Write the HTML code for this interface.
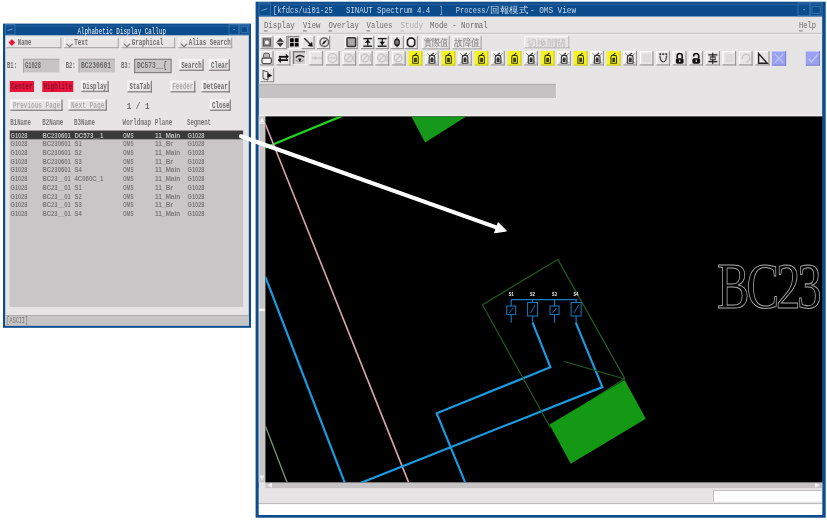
<!DOCTYPE html><html><head><meta charset="utf-8"><style>html,body{margin:0;padding:0;background:#fff;overflow:hidden}svg{display:block;filter:blur(0.35px)}</style></head><body>
<svg width="827" height="520" viewBox="0 0 827 520">
<rect x="0" y="0" width="827" height="520" fill="#ffffff"/>
<rect x="3" y="23.6" width="248" height="304.2" fill="#0b4c8c"/>
<rect x="5.2" y="35.3" width="243.6" height="290.3" fill="#e6e4e4"/>
<rect x="5" y="25.6" width="244" height="0.9" fill="#2d65a0"/>
<rect x="5.5" y="24.5" width="9.5" height="10" fill="none" stroke="#3d78b4" stroke-width="0.8"/>
<line x1="7.5" y1="30.5" x2="12.5" y2="29.0" stroke="#7aa6d2" stroke-width="0.9"/>
<rect x="229" y="24.5" width="10" height="10" fill="none" stroke="#3d78b4" stroke-width="0.8"/>
<rect x="239" y="24.5" width="10" height="10" fill="none" stroke="#3d78b4" stroke-width="0.8"/>
<rect x="233.5" y="29" width="1" height="1" fill="#9bbbe0"/>
<rect x="241" y="26.5" width="6.5" height="6" fill="none" stroke="#3d78b4" stroke-width="0.8"/>
<text x="77.4" y="33.6" font-size="8.296" fill="#f0f4fa" font-family="Liberation Mono" textLength="88.6" lengthAdjust="spacingAndGlyphs">Alphabetic Display Callup</text>
<rect x="6.3" y="37.7" width="55.1" height="10.5" fill="#e6e4e4"/>
<rect x="6.3" y="37.7" width="55.1" height="1.0" fill="#f4f4f4"/>
<rect x="6.3" y="37.7" width="1.0" height="10.5" fill="#f4f4f4"/>
<rect x="6.3" y="47.2" width="55.1" height="1.0" fill="#a4a2a2"/>
<rect x="60.4" y="37.7" width="1.0" height="10.5" fill="#a4a2a2"/>
<polygon points="8.599999999999998,42.6 11.899999999999999,39.300000000000004 15.2,42.6 11.899999999999999,45.9" fill="#e8143c"/>
<text x="17.8" y="45.2" font-size="8.54" fill="#707070" font-family="Liberation Mono" textLength="13.5" lengthAdjust="spacingAndGlyphs" font-weight="bold">Name</text>
<rect x="64" y="37.7" width="54.7" height="10.5" fill="#e6e4e4"/>
<rect x="64" y="37.7" width="54.7" height="1.0" fill="#f4f4f4"/>
<rect x="64" y="37.7" width="1.0" height="10.5" fill="#f4f4f4"/>
<rect x="64" y="47.2" width="54.7" height="1.0" fill="#a4a2a2"/>
<rect x="117.7" y="37.7" width="1.0" height="10.5" fill="#a4a2a2"/>
<polyline points="66.3,43.6 69.6,46.6 72.89999999999999,43.6" fill="none" stroke="#7a7878" stroke-width="1.25"/>
<polyline points="66.3,43.6 69.6,40.300000000000004 72.89999999999999,43.6" fill="none" stroke="#fafafa" stroke-width="0.9"/>
<text x="74.3" y="45.2" font-size="8.54" fill="#707070" font-family="Liberation Mono" textLength="14.0" lengthAdjust="spacingAndGlyphs" font-weight="bold">Text</text>
<rect x="121.4" y="37.7" width="53.79999999999998" height="10.5" fill="#e6e4e4"/>
<rect x="121.4" y="37.7" width="53.79999999999998" height="1.0" fill="#f4f4f4"/>
<rect x="121.4" y="37.7" width="1.0" height="10.5" fill="#f4f4f4"/>
<rect x="121.4" y="47.2" width="53.79999999999998" height="1.0" fill="#a4a2a2"/>
<rect x="174.2" y="37.7" width="1.0" height="10.5" fill="#a4a2a2"/>
<polyline points="123.7,43.6 127.0,46.6 130.3,43.6" fill="none" stroke="#7a7878" stroke-width="1.25"/>
<polyline points="123.7,43.6 127.0,40.300000000000004 130.3,43.6" fill="none" stroke="#fafafa" stroke-width="0.9"/>
<text x="131.70000000000002" y="45.2" font-size="8.54" fill="#707070" font-family="Liberation Mono" textLength="31.5" lengthAdjust="spacingAndGlyphs" font-weight="bold">Graphical</text>
<rect x="178.4" y="37.7" width="53.79999999999998" height="10.5" fill="#e6e4e4"/>
<rect x="178.4" y="37.7" width="53.79999999999998" height="1.0" fill="#f4f4f4"/>
<rect x="178.4" y="37.7" width="1.0" height="10.5" fill="#f4f4f4"/>
<rect x="178.4" y="47.2" width="53.79999999999998" height="1.0" fill="#a4a2a2"/>
<rect x="231.2" y="37.7" width="1.0" height="10.5" fill="#a4a2a2"/>
<polyline points="180.7,43.6 184.0,46.6 187.3,43.6" fill="none" stroke="#7a7878" stroke-width="1.25"/>
<polyline points="180.7,43.6 184.0,40.300000000000004 187.3,43.6" fill="none" stroke="#fafafa" stroke-width="0.9"/>
<text x="188.70000000000002" y="45.2" font-size="8.54" fill="#707070" font-family="Liberation Mono" textLength="42.0" lengthAdjust="spacingAndGlyphs" font-weight="bold">Alias Search</text>
<text x="7" y="67.5" font-size="8.54" fill="#707070" font-family="Liberation Mono" textLength="10" lengthAdjust="spacingAndGlyphs" font-weight="bold">B1:</text>
<rect x="23" y="58.8" width="36.4" height="13.6" fill="#c6c4c4"/>
<rect x="23" y="58.8" width="36.4" height="1" fill="#a8a6a6"/>
<rect x="23" y="58.8" width="1" height="13.6" fill="#a8a6a6"/>
<text x="25" y="67.5" font-size="8.54" fill="#6a6a6a" font-family="Liberation Mono" textLength="16" lengthAdjust="spacingAndGlyphs" font-weight="bold">G1028</text>
<text x="65.7" y="67.5" font-size="8.54" fill="#707070" font-family="Liberation Mono" textLength="10" lengthAdjust="spacingAndGlyphs" font-weight="bold">B2:</text>
<rect x="78.6" y="58.8" width="36.4" height="13.6" fill="#c6c4c4"/>
<rect x="78.6" y="58.8" width="36.4" height="1" fill="#a8a6a6"/>
<rect x="78.6" y="58.8" width="1" height="13.6" fill="#a8a6a6"/>
<text x="81" y="67.5" font-size="8.54" fill="#6a6a6a" font-family="Liberation Mono" textLength="30" lengthAdjust="spacingAndGlyphs" font-weight="bold">BC230601</text>
<text x="120.9" y="67.5" font-size="8.54" fill="#707070" font-family="Liberation Mono" textLength="10" lengthAdjust="spacingAndGlyphs" font-weight="bold">B3:</text>
<rect x="134" y="58.7" width="37.7" height="14.5" fill="#838181"/>
<rect x="135.2" y="59.9" width="35.3" height="12.1" fill="#c8c6c6"/>
<text x="137" y="67.8" font-size="8.54" fill="#6a6a6a" font-family="Liberation Mono" textLength="30" lengthAdjust="spacingAndGlyphs" font-weight="bold">DC573__{</text>
<rect x="179.3" y="59.2" width="24.5" height="11.799999999999997" fill="#e6e4e4"/>
<rect x="179.3" y="59.2" width="24.5" height="1.4" fill="#fbfbfb"/>
<rect x="179.3" y="59.2" width="1.4" height="11.799999999999997" fill="#fbfbfb"/>
<rect x="179.3" y="69.6" width="24.5" height="1.4" fill="#8a8888"/>
<rect x="202.4" y="59.2" width="1.4" height="11.799999999999997" fill="#8a8888"/>
<text x="181.2" y="67.5" font-size="8.54" fill="#707070" font-family="Liberation Mono" textLength="20.5" lengthAdjust="spacingAndGlyphs" font-weight="bold">Search</text>
<rect x="209" y="59.2" width="21" height="11.799999999999997" fill="#e6e4e4"/>
<rect x="209" y="59.2" width="21" height="1.4" fill="#fbfbfb"/>
<rect x="209" y="59.2" width="1.4" height="11.799999999999997" fill="#fbfbfb"/>
<rect x="209" y="69.6" width="21" height="1.4" fill="#8a8888"/>
<rect x="228.6" y="59.2" width="1.4" height="11.799999999999997" fill="#8a8888"/>
<text x="211" y="67.5" font-size="8.54" fill="#707070" font-family="Liberation Mono" textLength="17.2" lengthAdjust="spacingAndGlyphs" font-weight="bold">Clear</text>
<rect x="9.8" y="81" width="24.2" height="11" fill="#e8143c"/>
<text x="11" y="89.2" font-size="8.54" fill="#8a1028" font-family="Liberation Mono" textLength="21.5" lengthAdjust="spacingAndGlyphs" font-weight="bold">Center</text>
<rect x="42.3" y="81" width="31" height="11" fill="#e8143c"/>
<text x="43.5" y="89.2" font-size="8.54" fill="#8a1028" font-family="Liberation Mono" textLength="28.5" lengthAdjust="spacingAndGlyphs" font-weight="bold">Highlite</text>
<rect x="81.2" y="80.8" width="27.599999999999994" height="11.299999999999997" fill="#e6e4e4"/>
<rect x="81.2" y="80.8" width="27.599999999999994" height="1.4" fill="#fbfbfb"/>
<rect x="81.2" y="80.8" width="1.4" height="11.299999999999997" fill="#fbfbfb"/>
<rect x="81.2" y="90.69999999999999" width="27.599999999999994" height="1.4" fill="#8a8888"/>
<rect x="107.39999999999999" y="80.8" width="1.4" height="11.299999999999997" fill="#8a8888"/>
<text x="82.8" y="89.2" font-size="8.54" fill="#707070" font-family="Liberation Mono" textLength="24" lengthAdjust="spacingAndGlyphs" font-weight="bold">Display</text>
<rect x="127.5" y="80.8" width="24.5" height="11.700000000000003" fill="#e6e4e4"/>
<rect x="127.5" y="80.8" width="24.5" height="1.4" fill="#fbfbfb"/>
<rect x="127.5" y="80.8" width="1.4" height="11.700000000000003" fill="#fbfbfb"/>
<rect x="127.5" y="91.1" width="24.5" height="1.4" fill="#8a8888"/>
<rect x="150.6" y="80.8" width="1.4" height="11.700000000000003" fill="#8a8888"/>
<text x="129.5" y="89.2" font-size="8.54" fill="#707070" font-family="Liberation Mono" textLength="20.5" lengthAdjust="spacingAndGlyphs" font-weight="bold">StaTab</text>
<rect x="170.5" y="80.8" width="24.900000000000006" height="11.700000000000003" fill="#e6e4e4"/>
<rect x="170.5" y="80.8" width="24.900000000000006" height="1.4" fill="#fbfbfb"/>
<rect x="170.5" y="80.8" width="1.4" height="11.700000000000003" fill="#fbfbfb"/>
<rect x="170.5" y="91.1" width="24.900000000000006" height="1.4" fill="#8a8888"/>
<rect x="194.0" y="80.8" width="1.4" height="11.700000000000003" fill="#8a8888"/>
<text x="172.2" y="89.2" font-size="8.54" fill="#b0aeae" font-family="Liberation Mono" textLength="21" lengthAdjust="spacingAndGlyphs" font-weight="bold">Feeder</text>
<rect x="201.5" y="80.8" width="28.5" height="11.700000000000003" fill="#e6e4e4"/>
<rect x="201.5" y="80.8" width="28.5" height="1.4" fill="#fbfbfb"/>
<rect x="201.5" y="80.8" width="1.4" height="11.700000000000003" fill="#fbfbfb"/>
<rect x="201.5" y="91.1" width="28.5" height="1.4" fill="#8a8888"/>
<rect x="228.6" y="80.8" width="1.4" height="11.700000000000003" fill="#8a8888"/>
<text x="203.3" y="89.2" font-size="8.54" fill="#707070" font-family="Liberation Mono" textLength="24.5" lengthAdjust="spacingAndGlyphs" font-weight="bold">DetGear</text>
<rect x="10.3" y="99.6" width="52.400000000000006" height="11.400000000000006" fill="#e6e4e4"/>
<rect x="10.3" y="99.6" width="52.400000000000006" height="1.4" fill="#fbfbfb"/>
<rect x="10.3" y="99.6" width="1.4" height="11.400000000000006" fill="#fbfbfb"/>
<rect x="10.3" y="109.6" width="52.400000000000006" height="1.4" fill="#8a8888"/>
<rect x="61.300000000000004" y="99.6" width="1.4" height="11.400000000000006" fill="#8a8888"/>
<text x="13" y="108" font-size="8.54" fill="#b0aeae" font-family="Liberation Mono" textLength="47" lengthAdjust="spacingAndGlyphs" font-weight="bold">Previous Page</text>
<rect x="68.5" y="99.5" width="38.5" height="11.299999999999997" fill="#e6e4e4"/>
<rect x="68.5" y="99.5" width="38.5" height="1.4" fill="#fbfbfb"/>
<rect x="68.5" y="99.5" width="1.4" height="11.299999999999997" fill="#fbfbfb"/>
<rect x="68.5" y="109.39999999999999" width="38.5" height="1.4" fill="#8a8888"/>
<rect x="105.6" y="99.5" width="1.4" height="11.299999999999997" fill="#8a8888"/>
<text x="71" y="108" font-size="8.54" fill="#b0aeae" font-family="Liberation Mono" textLength="33.5" lengthAdjust="spacingAndGlyphs" font-weight="bold">Next Page</text>
<text x="126.7" y="108.6" font-size="9.272" fill="#707070" font-family="Liberation Mono" textLength="22.8" lengthAdjust="spacingAndGlyphs" font-weight="bold">1 / 1</text>
<rect x="210" y="99.6" width="21" height="11.400000000000006" fill="#e6e4e4"/>
<rect x="210" y="99.6" width="21" height="1.4" fill="#fbfbfb"/>
<rect x="210" y="99.6" width="1.4" height="11.400000000000006" fill="#fbfbfb"/>
<rect x="210" y="109.6" width="21" height="1.4" fill="#8a8888"/>
<rect x="229.6" y="99.6" width="1.4" height="11.400000000000006" fill="#8a8888"/>
<text x="212" y="108" font-size="8.54" fill="#707070" font-family="Liberation Mono" textLength="17.5" lengthAdjust="spacingAndGlyphs" font-weight="bold">Close</text>
<text x="10.3" y="124.8" font-size="8.54" fill="#7a7878" font-family="Liberation Mono" textLength="20.5" lengthAdjust="spacingAndGlyphs" font-weight="bold">B1Name</text>
<text x="42.3" y="124.8" font-size="8.54" fill="#7a7878" font-family="Liberation Mono" textLength="21" lengthAdjust="spacingAndGlyphs" font-weight="bold">B2Name</text>
<text x="74" y="124.8" font-size="8.54" fill="#7a7878" font-family="Liberation Mono" textLength="21" lengthAdjust="spacingAndGlyphs" font-weight="bold">B3Name</text>
<text x="122.6" y="124.8" font-size="8.54" fill="#7a7878" font-family="Liberation Mono" textLength="28.5" lengthAdjust="spacingAndGlyphs" font-weight="bold">Worldmap</text>
<text x="154.8" y="124.8" font-size="8.54" fill="#7a7878" font-family="Liberation Mono" textLength="17.5" lengthAdjust="spacingAndGlyphs" font-weight="bold">Plane</text>
<text x="187" y="124.8" font-size="8.54" fill="#7a7878" font-family="Liberation Mono" textLength="24" lengthAdjust="spacingAndGlyphs" font-weight="bold">Segment</text>
<rect x="9.6" y="130.4" width="233.5" height="176.5" fill="#c8c6c6"/>
<rect x="9.8" y="130.6" width="233.3" height="8.7" fill="#3b3b3b"/>
<text x="10.5" y="137.6" font-size="8.12" fill="#bdbdbd" font-family="Liberation Sans" textLength="17" lengthAdjust="spacingAndGlyphs" font-weight="bold">G1028</text>
<text x="42.5" y="137.6" font-size="8.12" fill="#bdbdbd" font-family="Liberation Sans" textLength="28.3" lengthAdjust="spacingAndGlyphs" font-weight="bold">BC230601</text>
<text x="74.5" y="137.6" font-size="8.12" fill="#bdbdbd" font-family="Liberation Sans" textLength="28.8" lengthAdjust="spacingAndGlyphs" font-weight="bold">DC573__1</text>
<text x="123" y="137.6" font-size="8.12" fill="#bdbdbd" font-family="Liberation Sans" textLength="10.5" lengthAdjust="spacingAndGlyphs" font-weight="bold">OMS</text>
<text x="155" y="137.6" font-size="8.12" fill="#bdbdbd" font-family="Liberation Sans" textLength="25.2" lengthAdjust="spacingAndGlyphs" font-weight="bold">11_Main</text>
<text x="187.5" y="137.6" font-size="8.12" fill="#bdbdbd" font-family="Liberation Sans" textLength="17" lengthAdjust="spacingAndGlyphs" font-weight="bold">G1028</text>
<text x="10.5" y="146.29999999999998" font-size="8.12" fill="#7c7a7a" font-family="Liberation Sans" textLength="17" lengthAdjust="spacingAndGlyphs" font-weight="bold">G1028</text>
<text x="42.5" y="146.29999999999998" font-size="8.12" fill="#7c7a7a" font-family="Liberation Sans" textLength="28.3" lengthAdjust="spacingAndGlyphs" font-weight="bold">BC230601</text>
<text x="74.5" y="146.29999999999998" font-size="8.12" fill="#7c7a7a" font-family="Liberation Sans" textLength="7.2" lengthAdjust="spacingAndGlyphs" font-weight="bold">S1</text>
<text x="123" y="146.29999999999998" font-size="8.12" fill="#7c7a7a" font-family="Liberation Sans" textLength="10.5" lengthAdjust="spacingAndGlyphs" font-weight="bold">OMS</text>
<text x="155" y="146.29999999999998" font-size="8.12" fill="#7c7a7a" font-family="Liberation Sans" textLength="18.0" lengthAdjust="spacingAndGlyphs" font-weight="bold">11_Br</text>
<text x="187.5" y="146.29999999999998" font-size="8.12" fill="#7c7a7a" font-family="Liberation Sans" textLength="17" lengthAdjust="spacingAndGlyphs" font-weight="bold">G1028</text>
<text x="10.5" y="155.0" font-size="8.12" fill="#7c7a7a" font-family="Liberation Sans" textLength="17" lengthAdjust="spacingAndGlyphs" font-weight="bold">G1028</text>
<text x="42.5" y="155.0" font-size="8.12" fill="#7c7a7a" font-family="Liberation Sans" textLength="28.3" lengthAdjust="spacingAndGlyphs" font-weight="bold">BC230601</text>
<text x="74.5" y="155.0" font-size="8.12" fill="#7c7a7a" font-family="Liberation Sans" textLength="7.2" lengthAdjust="spacingAndGlyphs" font-weight="bold">S2</text>
<text x="123" y="155.0" font-size="8.12" fill="#7c7a7a" font-family="Liberation Sans" textLength="10.5" lengthAdjust="spacingAndGlyphs" font-weight="bold">OMS</text>
<text x="155" y="155.0" font-size="8.12" fill="#7c7a7a" font-family="Liberation Sans" textLength="25.2" lengthAdjust="spacingAndGlyphs" font-weight="bold">11_Main</text>
<text x="187.5" y="155.0" font-size="8.12" fill="#7c7a7a" font-family="Liberation Sans" textLength="17" lengthAdjust="spacingAndGlyphs" font-weight="bold">G1028</text>
<text x="10.5" y="163.7" font-size="8.12" fill="#7c7a7a" font-family="Liberation Sans" textLength="17" lengthAdjust="spacingAndGlyphs" font-weight="bold">G1028</text>
<text x="42.5" y="163.7" font-size="8.12" fill="#7c7a7a" font-family="Liberation Sans" textLength="28.3" lengthAdjust="spacingAndGlyphs" font-weight="bold">BC230601</text>
<text x="74.5" y="163.7" font-size="8.12" fill="#7c7a7a" font-family="Liberation Sans" textLength="7.2" lengthAdjust="spacingAndGlyphs" font-weight="bold">S3</text>
<text x="123" y="163.7" font-size="8.12" fill="#7c7a7a" font-family="Liberation Sans" textLength="10.5" lengthAdjust="spacingAndGlyphs" font-weight="bold">OMS</text>
<text x="155" y="163.7" font-size="8.12" fill="#7c7a7a" font-family="Liberation Sans" textLength="18.0" lengthAdjust="spacingAndGlyphs" font-weight="bold">11_Br</text>
<text x="187.5" y="163.7" font-size="8.12" fill="#7c7a7a" font-family="Liberation Sans" textLength="17" lengthAdjust="spacingAndGlyphs" font-weight="bold">G1028</text>
<text x="10.5" y="172.39999999999998" font-size="8.12" fill="#7c7a7a" font-family="Liberation Sans" textLength="17" lengthAdjust="spacingAndGlyphs" font-weight="bold">G1028</text>
<text x="42.5" y="172.39999999999998" font-size="8.12" fill="#7c7a7a" font-family="Liberation Sans" textLength="28.3" lengthAdjust="spacingAndGlyphs" font-weight="bold">BC230601</text>
<text x="74.5" y="172.39999999999998" font-size="8.12" fill="#7c7a7a" font-family="Liberation Sans" textLength="7.2" lengthAdjust="spacingAndGlyphs" font-weight="bold">S4</text>
<text x="123" y="172.39999999999998" font-size="8.12" fill="#7c7a7a" font-family="Liberation Sans" textLength="10.5" lengthAdjust="spacingAndGlyphs" font-weight="bold">OMS</text>
<text x="155" y="172.39999999999998" font-size="8.12" fill="#7c7a7a" font-family="Liberation Sans" textLength="25.2" lengthAdjust="spacingAndGlyphs" font-weight="bold">11_Main</text>
<text x="187.5" y="172.39999999999998" font-size="8.12" fill="#7c7a7a" font-family="Liberation Sans" textLength="17" lengthAdjust="spacingAndGlyphs" font-weight="bold">G1028</text>
<text x="10.5" y="181.1" font-size="8.12" fill="#7c7a7a" font-family="Liberation Sans" textLength="17" lengthAdjust="spacingAndGlyphs" font-weight="bold">G1028</text>
<text x="42.5" y="181.1" font-size="8.12" fill="#7c7a7a" font-family="Liberation Sans" textLength="28.3" lengthAdjust="spacingAndGlyphs" font-weight="bold">BC23__01</text>
<text x="74.5" y="181.1" font-size="8.12" fill="#7c7a7a" font-family="Liberation Sans" textLength="28.8" lengthAdjust="spacingAndGlyphs" font-weight="bold">4C060C_1</text>
<text x="123" y="181.1" font-size="8.12" fill="#7c7a7a" font-family="Liberation Sans" textLength="10.5" lengthAdjust="spacingAndGlyphs" font-weight="bold">OMS</text>
<text x="155" y="181.1" font-size="8.12" fill="#7c7a7a" font-family="Liberation Sans" textLength="25.2" lengthAdjust="spacingAndGlyphs" font-weight="bold">11_Main</text>
<text x="187.5" y="181.1" font-size="8.12" fill="#7c7a7a" font-family="Liberation Sans" textLength="17" lengthAdjust="spacingAndGlyphs" font-weight="bold">G1028</text>
<text x="10.5" y="189.79999999999998" font-size="8.12" fill="#7c7a7a" font-family="Liberation Sans" textLength="17" lengthAdjust="spacingAndGlyphs" font-weight="bold">G1028</text>
<text x="42.5" y="189.79999999999998" font-size="8.12" fill="#7c7a7a" font-family="Liberation Sans" textLength="28.3" lengthAdjust="spacingAndGlyphs" font-weight="bold">BC23__01</text>
<text x="74.5" y="189.79999999999998" font-size="8.12" fill="#7c7a7a" font-family="Liberation Sans" textLength="7.2" lengthAdjust="spacingAndGlyphs" font-weight="bold">S1</text>
<text x="123" y="189.79999999999998" font-size="8.12" fill="#7c7a7a" font-family="Liberation Sans" textLength="10.5" lengthAdjust="spacingAndGlyphs" font-weight="bold">OMS</text>
<text x="155" y="189.79999999999998" font-size="8.12" fill="#7c7a7a" font-family="Liberation Sans" textLength="18.0" lengthAdjust="spacingAndGlyphs" font-weight="bold">11_Br</text>
<text x="187.5" y="189.79999999999998" font-size="8.12" fill="#7c7a7a" font-family="Liberation Sans" textLength="17" lengthAdjust="spacingAndGlyphs" font-weight="bold">G1028</text>
<text x="10.5" y="198.5" font-size="8.12" fill="#7c7a7a" font-family="Liberation Sans" textLength="17" lengthAdjust="spacingAndGlyphs" font-weight="bold">G1028</text>
<text x="42.5" y="198.5" font-size="8.12" fill="#7c7a7a" font-family="Liberation Sans" textLength="28.3" lengthAdjust="spacingAndGlyphs" font-weight="bold">BC23__01</text>
<text x="74.5" y="198.5" font-size="8.12" fill="#7c7a7a" font-family="Liberation Sans" textLength="7.2" lengthAdjust="spacingAndGlyphs" font-weight="bold">S2</text>
<text x="123" y="198.5" font-size="8.12" fill="#7c7a7a" font-family="Liberation Sans" textLength="10.5" lengthAdjust="spacingAndGlyphs" font-weight="bold">OMS</text>
<text x="155" y="198.5" font-size="8.12" fill="#7c7a7a" font-family="Liberation Sans" textLength="25.2" lengthAdjust="spacingAndGlyphs" font-weight="bold">11_Main</text>
<text x="187.5" y="198.5" font-size="8.12" fill="#7c7a7a" font-family="Liberation Sans" textLength="17" lengthAdjust="spacingAndGlyphs" font-weight="bold">G1028</text>
<text x="10.5" y="207.2" font-size="8.12" fill="#7c7a7a" font-family="Liberation Sans" textLength="17" lengthAdjust="spacingAndGlyphs" font-weight="bold">G1028</text>
<text x="42.5" y="207.2" font-size="8.12" fill="#7c7a7a" font-family="Liberation Sans" textLength="28.3" lengthAdjust="spacingAndGlyphs" font-weight="bold">BC23__01</text>
<text x="74.5" y="207.2" font-size="8.12" fill="#7c7a7a" font-family="Liberation Sans" textLength="7.2" lengthAdjust="spacingAndGlyphs" font-weight="bold">S3</text>
<text x="123" y="207.2" font-size="8.12" fill="#7c7a7a" font-family="Liberation Sans" textLength="10.5" lengthAdjust="spacingAndGlyphs" font-weight="bold">OMS</text>
<text x="155" y="207.2" font-size="8.12" fill="#7c7a7a" font-family="Liberation Sans" textLength="18.0" lengthAdjust="spacingAndGlyphs" font-weight="bold">11_Br</text>
<text x="187.5" y="207.2" font-size="8.12" fill="#7c7a7a" font-family="Liberation Sans" textLength="17" lengthAdjust="spacingAndGlyphs" font-weight="bold">G1028</text>
<text x="10.5" y="215.89999999999998" font-size="8.12" fill="#7c7a7a" font-family="Liberation Sans" textLength="17" lengthAdjust="spacingAndGlyphs" font-weight="bold">G1028</text>
<text x="42.5" y="215.89999999999998" font-size="8.12" fill="#7c7a7a" font-family="Liberation Sans" textLength="28.3" lengthAdjust="spacingAndGlyphs" font-weight="bold">BC23__01</text>
<text x="74.5" y="215.89999999999998" font-size="8.12" fill="#7c7a7a" font-family="Liberation Sans" textLength="7.2" lengthAdjust="spacingAndGlyphs" font-weight="bold">S4</text>
<text x="123" y="215.89999999999998" font-size="8.12" fill="#7c7a7a" font-family="Liberation Sans" textLength="10.5" lengthAdjust="spacingAndGlyphs" font-weight="bold">OMS</text>
<text x="155" y="215.89999999999998" font-size="8.12" fill="#7c7a7a" font-family="Liberation Sans" textLength="25.2" lengthAdjust="spacingAndGlyphs" font-weight="bold">11_Main</text>
<text x="187.5" y="215.89999999999998" font-size="8.12" fill="#7c7a7a" font-family="Liberation Sans" textLength="17" lengthAdjust="spacingAndGlyphs" font-weight="bold">G1028</text>
<rect x="5.2" y="315" width="243.6" height="10.6" fill="#c6c4c4"/>
<rect x="5.2" y="315" width="243.6" height="0.8" fill="#aaa8a8"/>
<text x="6.5" y="323.4" font-size="8.54" fill="#777" font-family="Liberation Mono" textLength="21.5" lengthAdjust="spacingAndGlyphs">[ASCII]</text>
<rect x="255.6" y="1.7" width="570.1" height="516" fill="#0b4c8c"/>
<rect x="258.8" y="16.5" width="563.4" height="498.4" fill="#e6e4e4"/>
<rect x="258.5" y="3.8" width="564" height="0.9" fill="#2d65a0"/>
<rect x="259" y="2.8" width="11.3" height="13" fill="none" stroke="#3d78b4" stroke-width="0.8"/>
<line x1="261.5" y1="10.5" x2="267.5" y2="8.7" stroke="#7aa6d2" stroke-width="0.9"/>
<rect x="798" y="2.8" width="12" height="13" fill="none" stroke="#3d78b4" stroke-width="0.8"/>
<rect x="810" y="2.8" width="12" height="13" fill="none" stroke="#3d78b4" stroke-width="0.8"/>
<rect x="803.5" y="9" width="1.2" height="1.2" fill="#9bbbe0"/>
<rect x="812" y="6.5" width="8.2" height="7" fill="none" stroke="#3d78b4" stroke-width="0.8"/>
<text x="273" y="13.4" font-size="9.028" fill="#c8d8ea" font-family="Liberation Mono" textLength="59.7" lengthAdjust="spacingAndGlyphs">[kfdcs/ui01-25</text>
<text x="346" y="13.4" font-size="9.028" fill="#c8d8ea" font-family="Liberation Mono" textLength="84.3" lengthAdjust="spacingAndGlyphs">SINAUT Spectrum 4.4</text>
<text x="439.8" y="13.4" font-size="9.028" fill="#c8d8ea" font-family="Liberation Mono" textLength="3" lengthAdjust="spacingAndGlyphs">]</text>
<text x="455.8" y="13.4" font-size="9.028" fill="#c8d8ea" font-family="Liberation Mono" textLength="34" lengthAdjust="spacingAndGlyphs">Process/</text>
<text x="490" y="13.4" font-size="9" fill="#cddcec" font-family="Liberation Sans" textLength="38" lengthAdjust="spacingAndGlyphs">回報模式</text>
<text x="530" y="13.4" font-size="9.028" fill="#c8d8ea" font-family="Liberation Mono" textLength="46" lengthAdjust="spacingAndGlyphs">- OMS View</text>
<rect x="258.8" y="32.9" width="563.4" height="0.9" fill="#b4b2b2"/>
<rect x="258.8" y="33.8" width="563.4" height="0.8" fill="#f6f6f6"/>
<text x="263.9" y="28.3" font-size="9.76" fill="#6a6a6a" font-family="Liberation Mono" textLength="30.9" lengthAdjust="spacingAndGlyphs">Display</text>
<text x="303" y="28.3" font-size="9.76" fill="#6a6a6a" font-family="Liberation Mono" textLength="17.4" lengthAdjust="spacingAndGlyphs">View</text>
<text x="328.4" y="28.3" font-size="9.76" fill="#6a6a6a" font-family="Liberation Mono" textLength="30.4" lengthAdjust="spacingAndGlyphs">Overlay</text>
<text x="366.6" y="28.3" font-size="9.76" fill="#6a6a6a" font-family="Liberation Mono" textLength="25.7" lengthAdjust="spacingAndGlyphs">Values</text>
<text x="400.5" y="28.3" font-size="9.76" fill="#b0aeae" font-family="Liberation Mono" textLength="22.6" lengthAdjust="spacingAndGlyphs">Study</text>
<text x="430" y="28.3" font-size="9.76" fill="#6a6a6a" font-family="Liberation Mono" textLength="57.7" lengthAdjust="spacingAndGlyphs">Mode - Normal</text>
<text x="799" y="28.3" font-size="9.76" fill="#6a6a6a" font-family="Liberation Mono" textLength="17" lengthAdjust="spacingAndGlyphs">Help</text>
<rect x="263.9" y="30.4" width="3.6" height="1.0" fill="#777"/>
<rect x="303" y="30.4" width="3.6" height="1.0" fill="#777"/>
<rect x="328.4" y="30.4" width="3.6" height="1.0" fill="#777"/>
<rect x="366.6" y="30.4" width="3.6" height="1.0" fill="#777"/>
<rect x="400.5" y="30.4" width="3.6" height="1.0" fill="#bbb"/>
<rect x="799" y="30.4" width="3.6" height="1.0" fill="#777"/>
<rect x="260.4" y="35.9" width="13.199999999999989" height="13.300000000000004" fill="#e6e4e4"/>
<rect x="260.4" y="35.9" width="13.199999999999989" height="1.2" fill="#fdfdfd"/>
<rect x="260.4" y="35.9" width="1.2" height="13.300000000000004" fill="#fdfdfd"/>
<rect x="260.4" y="48.0" width="13.199999999999989" height="1.2" fill="#9a9898"/>
<rect x="272.4" y="35.9" width="1.2" height="13.300000000000004" fill="#9a9898"/>
<rect x="273.9" y="35.9" width="13.199999999999989" height="13.300000000000004" fill="#f0eeee"/>
<rect x="273.9" y="35.9" width="13.199999999999989" height="1.2" fill="#fdfdfd"/>
<rect x="273.9" y="35.9" width="1.2" height="13.300000000000004" fill="#fdfdfd"/>
<rect x="273.9" y="48.0" width="13.199999999999989" height="1.2" fill="#9a9898"/>
<rect x="285.9" y="35.9" width="1.2" height="13.300000000000004" fill="#9a9898"/>
<rect x="287.4" y="35.9" width="13.199999999999989" height="13.300000000000004" fill="#dcdada"/>
<rect x="287.4" y="35.9" width="13.199999999999989" height="1.3" fill="#8a8888"/>
<rect x="287.4" y="35.9" width="1.3" height="13.300000000000004" fill="#8a8888"/>
<rect x="287.4" y="47.900000000000006" width="13.199999999999989" height="1.3" fill="#f6f6f6"/>
<rect x="299.29999999999995" y="35.9" width="1.3" height="13.300000000000004" fill="#f6f6f6"/>
<rect x="301.5" y="35.9" width="13.199999999999989" height="13.300000000000004" fill="#e6e4e4"/>
<rect x="301.5" y="35.9" width="13.199999999999989" height="1.2" fill="#fdfdfd"/>
<rect x="301.5" y="35.9" width="1.2" height="13.300000000000004" fill="#fdfdfd"/>
<rect x="301.5" y="48.0" width="13.199999999999989" height="1.2" fill="#9a9898"/>
<rect x="313.5" y="35.9" width="1.2" height="13.300000000000004" fill="#9a9898"/>
<rect x="317.0" y="35.9" width="13.199999999999989" height="13.300000000000004" fill="#e6e4e4"/>
<rect x="317.0" y="35.9" width="13.199999999999989" height="1.2" fill="#fdfdfd"/>
<rect x="317.0" y="35.9" width="1.2" height="13.300000000000004" fill="#fdfdfd"/>
<rect x="317.0" y="48.0" width="13.199999999999989" height="1.2" fill="#9a9898"/>
<rect x="329.0" y="35.9" width="1.2" height="13.300000000000004" fill="#9a9898"/>
<rect x="344.7" y="35.9" width="13.399999999999977" height="13.300000000000004" fill="#e6e4e4"/>
<rect x="344.7" y="35.9" width="13.399999999999977" height="1.2" fill="#fdfdfd"/>
<rect x="344.7" y="35.9" width="1.2" height="13.300000000000004" fill="#fdfdfd"/>
<rect x="344.7" y="48.0" width="13.399999999999977" height="1.2" fill="#9a9898"/>
<rect x="356.9" y="35.9" width="1.2" height="13.300000000000004" fill="#9a9898"/>
<rect x="361.0" y="35.9" width="13.399999999999977" height="13.300000000000004" fill="#e6e4e4"/>
<rect x="361.0" y="35.9" width="13.399999999999977" height="1.2" fill="#fdfdfd"/>
<rect x="361.0" y="35.9" width="1.2" height="13.300000000000004" fill="#fdfdfd"/>
<rect x="361.0" y="48.0" width="13.399999999999977" height="1.2" fill="#9a9898"/>
<rect x="373.2" y="35.9" width="1.2" height="13.300000000000004" fill="#9a9898"/>
<rect x="375.5" y="35.9" width="13.399999999999977" height="13.300000000000004" fill="#e6e4e4"/>
<rect x="375.5" y="35.9" width="13.399999999999977" height="1.2" fill="#fdfdfd"/>
<rect x="375.5" y="35.9" width="1.2" height="13.300000000000004" fill="#fdfdfd"/>
<rect x="375.5" y="48.0" width="13.399999999999977" height="1.2" fill="#9a9898"/>
<rect x="387.7" y="35.9" width="1.2" height="13.300000000000004" fill="#9a9898"/>
<rect x="390.6" y="35.9" width="13.399999999999977" height="13.300000000000004" fill="#e6e4e4"/>
<rect x="390.6" y="35.9" width="13.399999999999977" height="1.2" fill="#fdfdfd"/>
<rect x="390.6" y="35.9" width="1.2" height="13.300000000000004" fill="#fdfdfd"/>
<rect x="390.6" y="48.0" width="13.399999999999977" height="1.2" fill="#9a9898"/>
<rect x="402.8" y="35.9" width="1.2" height="13.300000000000004" fill="#9a9898"/>
<rect x="404.6" y="35.9" width="13.399999999999977" height="13.300000000000004" fill="#e6e4e4"/>
<rect x="404.6" y="35.9" width="13.399999999999977" height="1.2" fill="#fdfdfd"/>
<rect x="404.6" y="35.9" width="1.2" height="13.300000000000004" fill="#fdfdfd"/>
<rect x="404.6" y="48.0" width="13.399999999999977" height="1.2" fill="#9a9898"/>
<rect x="416.8" y="35.9" width="1.2" height="13.300000000000004" fill="#9a9898"/>
<rect x="261.59999999999997" y="37.1" width="10.6" height="10.6" fill="#b4b2b2"/>
<rect x="263.4" y="38.9" width="7" height="7" fill="#8a8888" stroke="#555" stroke-width="1.1"/>
<circle cx="266.9" cy="42.4" r="1.9" fill="#fafafa"/>
<polygon points="276.2,42.3 280.2,37.699999999999996 284.2,42.3 280.2,46.9" fill="#3a3a3a"/>
<rect x="276.59999999999997" y="41.8" width="7.2" height="1.1" fill="#d8d8d8"/>
<rect x="290.0" y="38.199999999999996" width="3.8" height="3.8" rx="0.6" fill="#0a0a0a"/>
<rect x="290.0" y="42.8" width="3.8" height="3.8" rx="0.6" fill="#0a0a0a"/>
<rect x="294.79999999999995" y="38.199999999999996" width="3.8" height="3.8" rx="0.6" fill="#0a0a0a"/>
<rect x="294.79999999999995" y="42.8" width="3.8" height="3.8" rx="0.6" fill="#0a0a0a"/>
<line x1="304.3" y1="38.3" x2="311.0" y2="45.0" stroke="#333" stroke-width="1.5"/>
<polygon points="312.7,46.7 307.7,46.099999999999994 312.1,41.699999999999996" fill="#111"/>
<circle cx="324.3" cy="42.3" r="4.3" fill="none" stroke="#666" stroke-width="1.5"/>
<polygon points="321.5,45.099999999999994 323.7,41.4 327.1,39.5 324.90000000000003,43.199999999999996" fill="#111"/>
<rect x="347.0" y="37.8" width="8.6" height="8.8" rx="1" fill="#a8a6a6" stroke="#333" stroke-width="1.5"/>
<rect x="363.3" y="37.9" width="8.8" height="1.4" fill="#222"/>
<rect x="363.3" y="45.5" width="8.8" height="1.4" fill="#222"/>
<rect x="367.1" y="38.9" width="1.3" height="6.8" fill="#222"/>
<polygon points="364.8,42.699999999999996 370.6,42.699999999999996 367.7,39.5" fill="#111"/>
<rect x="377.8" y="37.9" width="8.8" height="1.4" fill="#222"/>
<rect x="377.8" y="45.5" width="8.8" height="1.4" fill="#222"/>
<rect x="381.6" y="38.9" width="1.3" height="6.8" fill="#222"/>
<polygon points="379.3,41.699999999999996 385.1,41.699999999999996 382.2,45.099999999999994" fill="#111"/>
<ellipse cx="397.0" cy="42.3" rx="2.2" ry="3.2" fill="none" stroke="#111" stroke-width="1.4"/>
<line x1="397.0" y1="37.3" x2="397.0" y2="47.3" stroke="#222" stroke-width="1.1"/>
<polygon points="407.5,40.0 409.5,38.099999999999994 412.70000000000005,38.099999999999994 414.70000000000005,40.0 414.70000000000005,44.599999999999994 412.70000000000005,46.5 409.5,46.5 407.5,44.599999999999994" fill="#f4f4f4" stroke="#222" stroke-width="1.6"/>
<rect x="422" y="35.9" width="27.69999999999999" height="13.5" fill="#e6e4e4"/>
<rect x="422" y="35.9" width="27.69999999999999" height="1.0" fill="#fbfbfb"/>
<rect x="422" y="35.9" width="1.0" height="13.5" fill="#fbfbfb"/>
<rect x="422" y="48.4" width="27.69999999999999" height="1.0" fill="#a09e9e"/>
<rect x="448.7" y="35.9" width="1.0" height="13.5" fill="#a09e9e"/>
<text x="423.5" y="46.4" font-size="9.5" fill="#808080" font-family="Liberation Sans" textLength="24.5" lengthAdjust="spacingAndGlyphs">實際值</text>
<rect x="452.5" y="35.9" width="29.100000000000023" height="13.5" fill="#e6e4e4"/>
<rect x="452.5" y="35.9" width="29.100000000000023" height="1.0" fill="#fbfbfb"/>
<rect x="452.5" y="35.9" width="1.0" height="13.5" fill="#fbfbfb"/>
<rect x="452.5" y="48.4" width="29.100000000000023" height="1.0" fill="#a09e9e"/>
<rect x="480.6" y="35.9" width="1.0" height="13.5" fill="#a09e9e"/>
<text x="454" y="46.4" font-size="9.5" fill="#808080" font-family="Liberation Sans" textLength="26" lengthAdjust="spacingAndGlyphs">故障值</text>
<rect x="524.3" y="36" width="45.0" height="12.299999999999997" fill="#e6e4e4"/>
<rect x="524.3" y="36" width="45.0" height="1.0" fill="#fbfbfb"/>
<rect x="524.3" y="36" width="1.0" height="12.299999999999997" fill="#fbfbfb"/>
<rect x="524.3" y="47.3" width="45.0" height="1.0" fill="#b4b2b2"/>
<rect x="568.3" y="36" width="1.0" height="12.299999999999997" fill="#b4b2b2"/>
<text x="527" y="45.5" font-size="9" fill="#bcbaba" font-family="Liberation Sans" textLength="39" lengthAdjust="spacingAndGlyphs">切換開關</text>
<rect x="259.8" y="51.0" width="13.800000000000011" height="14.5" fill="#e6e4e4"/>
<rect x="259.8" y="51.0" width="13.800000000000011" height="1.2" fill="#fdfdfd"/>
<rect x="259.8" y="51.0" width="1.2" height="14.5" fill="#fdfdfd"/>
<rect x="259.8" y="64.3" width="13.800000000000011" height="1.2" fill="#9a9898"/>
<rect x="272.40000000000003" y="51.0" width="1.2" height="14.5" fill="#9a9898"/>
<rect x="263.6" y="53.2" width="5.8" height="5.2" rx="1.5" fill="#bbb" stroke="#555" stroke-width="1"/>
<rect x="262.0" y="58.0" width="9.4" height="5.6" rx="1.5" fill="#f6f6f6" stroke="#555" stroke-width="1.3"/>
<rect x="276.32" y="51.0" width="14.199999999999989" height="14.5" fill="#e6e4e4"/>
<rect x="276.32" y="51.0" width="14.199999999999989" height="1.2" fill="#fdfdfd"/>
<rect x="276.32" y="51.0" width="1.2" height="14.5" fill="#fdfdfd"/>
<rect x="276.32" y="64.3" width="14.199999999999989" height="1.2" fill="#9a9898"/>
<rect x="289.32" y="51.0" width="1.2" height="14.5" fill="#9a9898"/>
<rect x="278.82" y="55.9" width="8.5" height="1.8" fill="#111"/>
<polygon points="285.82,53.6 288.82,56.8 285.82,59.6" fill="#111"/>
<rect x="279.52" y="59.2" width="8.5" height="1.8" fill="#111"/>
<polygon points="280.82,57.0 277.82,60.1 280.82,63.2" fill="#111"/>
<rect x="292.84000000000003" y="51.0" width="13.800000000000011" height="14.5" fill="#d4d2d2"/>
<rect x="292.84000000000003" y="51.0" width="13.800000000000011" height="1.4" fill="#7a7878"/>
<rect x="292.84000000000003" y="51.0" width="1.4" height="14.5" fill="#7a7878"/>
<rect x="292.84000000000003" y="64.1" width="13.800000000000011" height="1.4" fill="#f2f2f2"/>
<rect x="305.24000000000007" y="51.0" width="1.4" height="14.5" fill="#f2f2f2"/>
<path d="M295.84000000000003,57.5 Q299.84000000000003,53.5 304.14000000000004,57.3" fill="none" stroke="#222" stroke-width="1.3"/>
<path d="M298.04,58.4 L301.64000000000004,58.4 L299.84000000000003,62.0 Z" fill="#111"/>
<path d="M295.84000000000003,60.0 Q299.84000000000003,63.5 303.84000000000003,60.0" fill="none" stroke="#777" stroke-width="0.9"/>
<rect x="309.36" y="51.0" width="13.800000000000011" height="14.5" fill="#e6e4e4"/>
<rect x="309.36" y="51.0" width="13.800000000000011" height="1.2" fill="#fdfdfd"/>
<rect x="309.36" y="51.0" width="1.2" height="14.5" fill="#fdfdfd"/>
<rect x="309.36" y="64.3" width="13.800000000000011" height="1.2" fill="#9a9898"/>
<rect x="321.96000000000004" y="51.0" width="1.2" height="14.5" fill="#9a9898"/>
<line x1="311.86" y1="58.0" x2="320.86" y2="58.0" stroke="#c4c2c2" stroke-width="1.1"/>
<polygon points="314.86,56.0 316.86,58.0 314.86,60.0" fill="#c4c2c2"/>
<polygon points="320.86,56.0 322.36,58.0 320.86,60.0" fill="#c4c2c2"/>
<rect x="325.88" y="51.0" width="13.800000000000011" height="14.5" fill="#e6e4e4"/>
<rect x="325.88" y="51.0" width="13.800000000000011" height="1.2" fill="#fdfdfd"/>
<rect x="325.88" y="51.0" width="1.2" height="14.5" fill="#fdfdfd"/>
<rect x="325.88" y="64.3" width="13.800000000000011" height="1.2" fill="#9a9898"/>
<rect x="338.48" y="51.0" width="1.2" height="14.5" fill="#9a9898"/>
<circle cx="332.48" cy="58.0" r="4.4" fill="none" stroke="#c4c2c2" stroke-width="1.2"/>
<line x1="329.48" y1="58.0" x2="335.48" y2="58.0" stroke="#c4c2c2" stroke-width="1.1"/>
<rect x="342.4" y="51.0" width="13.800000000000011" height="14.5" fill="#e6e4e4"/>
<rect x="342.4" y="51.0" width="13.800000000000011" height="1.2" fill="#fdfdfd"/>
<rect x="342.4" y="51.0" width="1.2" height="14.5" fill="#fdfdfd"/>
<rect x="342.4" y="64.3" width="13.800000000000011" height="1.2" fill="#9a9898"/>
<rect x="355.0" y="51.0" width="1.2" height="14.5" fill="#9a9898"/>
<circle cx="348.5" cy="58.0" r="3.9" fill="none" stroke="#c4c2c2" stroke-width="1.2"/>
<line x1="346.0" y1="60.6" x2="351.0" y2="55.4" stroke="#c4c2c2" stroke-width="1.1"/>
<rect x="353.4" y="54.0" width="1" height="8" fill="#c4c2c2"/>
<rect x="358.92" y="51.0" width="13.800000000000011" height="14.5" fill="#e6e4e4"/>
<rect x="358.92" y="51.0" width="13.800000000000011" height="1.2" fill="#fdfdfd"/>
<rect x="358.92" y="51.0" width="1.2" height="14.5" fill="#fdfdfd"/>
<rect x="358.92" y="64.3" width="13.800000000000011" height="1.2" fill="#9a9898"/>
<rect x="371.52000000000004" y="51.0" width="1.2" height="14.5" fill="#9a9898"/>
<circle cx="365.02000000000004" cy="58.0" r="3.9" fill="none" stroke="#c4c2c2" stroke-width="1.2"/>
<line x1="362.52000000000004" y1="60.6" x2="367.52000000000004" y2="55.4" stroke="#c4c2c2" stroke-width="1.1"/>
<rect x="369.92" y="54.0" width="1" height="8" fill="#c4c2c2"/>
<rect x="375.44" y="51.0" width="13.800000000000011" height="14.5" fill="#e6e4e4"/>
<rect x="375.44" y="51.0" width="13.800000000000011" height="1.2" fill="#fdfdfd"/>
<rect x="375.44" y="51.0" width="1.2" height="14.5" fill="#fdfdfd"/>
<rect x="375.44" y="64.3" width="13.800000000000011" height="1.2" fill="#9a9898"/>
<rect x="388.04" y="51.0" width="1.2" height="14.5" fill="#9a9898"/>
<circle cx="381.54" cy="58.0" r="3.9" fill="none" stroke="#c4c2c2" stroke-width="1.2"/>
<line x1="379.04" y1="60.6" x2="384.04" y2="55.4" stroke="#c4c2c2" stroke-width="1.1"/>
<rect x="386.44" y="54.0" width="1" height="8" fill="#c4c2c2"/>
<rect x="391.96000000000004" y="51.0" width="13.800000000000011" height="14.5" fill="#e6e4e4"/>
<rect x="391.96000000000004" y="51.0" width="13.800000000000011" height="1.2" fill="#fdfdfd"/>
<rect x="391.96000000000004" y="51.0" width="1.2" height="14.5" fill="#fdfdfd"/>
<rect x="391.96000000000004" y="64.3" width="13.800000000000011" height="1.2" fill="#9a9898"/>
<rect x="404.56000000000006" y="51.0" width="1.2" height="14.5" fill="#9a9898"/>
<circle cx="398.06000000000006" cy="58.0" r="3.9" fill="none" stroke="#c4c2c2" stroke-width="1.2"/>
<line x1="395.56000000000006" y1="60.6" x2="400.56000000000006" y2="55.4" stroke="#c4c2c2" stroke-width="1.1"/>
<rect x="394.96000000000004" y="63.0" width="7" height="1" fill="#c4c2c2"/>
<rect x="408.48" y="51.0" width="13.8" height="14.5" fill="#f6f41e"/>
<rect x="421.38" y="51.0" width="0.9" height="14.5" fill="#c2c030"/>
<rect x="408.48" y="64.6" width="13.8" height="0.9" fill="#c2c030"/>
<path d="M412.68,63.2 L412.68,57.2 Q412.68,55.4 414.28000000000003,55.4 L416.68,55.4 Q418.28000000000003,55.4 418.28000000000003,57.2 L418.28000000000003,63.2 Z" fill="none" stroke="#3a3a10" stroke-width="1.1"/>
<rect x="414.08000000000004" y="57.8" width="2.8" height="4.2" fill="#3a3a10"/>
<line x1="414.68" y1="55.2" x2="417.28000000000003" y2="52.8" stroke="#3a3a10" stroke-width="1.1"/>
<rect x="425.0" y="51.0" width="13.800000000000011" height="14.5" fill="#f0eeee"/>
<rect x="425.0" y="51.0" width="13.800000000000011" height="1.2" fill="#fdfdfd"/>
<rect x="425.0" y="51.0" width="1.2" height="14.5" fill="#fdfdfd"/>
<rect x="425.0" y="64.3" width="13.800000000000011" height="1.2" fill="#9a9898"/>
<rect x="437.6" y="51.0" width="1.2" height="14.5" fill="#9a9898"/>
<line x1="427.2" y1="53.2" x2="436.8" y2="63.4" stroke="#8a8888" stroke-width="0.9"/>
<line x1="436.8" y1="53.2" x2="427.2" y2="63.4" stroke="#8a8888" stroke-width="0.9"/>
<path d="M429.2,63.2 L429.2,57.2 Q429.2,55.4 430.8,55.4 L433.2,55.4 Q434.8,55.4 434.8,57.2 L434.8,63.2 Z" fill="none" stroke="#333" stroke-width="1.1"/>
<rect x="430.6" y="57.8" width="2.8" height="4.2" fill="#333"/>
<line x1="431.2" y1="55.2" x2="433.8" y2="52.8" stroke="#333" stroke-width="1.1"/>
<rect x="441.52" y="51.0" width="13.8" height="14.5" fill="#f6f41e"/>
<rect x="454.41999999999996" y="51.0" width="0.9" height="14.5" fill="#c2c030"/>
<rect x="441.52" y="64.6" width="13.8" height="0.9" fill="#c2c030"/>
<path d="M445.71999999999997,63.2 L445.71999999999997,57.2 Q445.71999999999997,55.4 447.32,55.4 L449.71999999999997,55.4 Q451.32,55.4 451.32,57.2 L451.32,63.2 Z" fill="none" stroke="#3a3a10" stroke-width="1.1"/>
<rect x="447.12" y="57.8" width="2.8" height="4.2" fill="#3a3a10"/>
<line x1="447.71999999999997" y1="55.2" x2="450.32" y2="52.8" stroke="#3a3a10" stroke-width="1.1"/>
<rect x="458.04" y="51.0" width="13.800000000000011" height="14.5" fill="#f0eeee"/>
<rect x="458.04" y="51.0" width="13.800000000000011" height="1.2" fill="#fdfdfd"/>
<rect x="458.04" y="51.0" width="1.2" height="14.5" fill="#fdfdfd"/>
<rect x="458.04" y="64.3" width="13.800000000000011" height="1.2" fill="#9a9898"/>
<rect x="470.64000000000004" y="51.0" width="1.2" height="14.5" fill="#9a9898"/>
<line x1="460.24" y1="53.2" x2="469.84000000000003" y2="63.4" stroke="#8a8888" stroke-width="0.9"/>
<line x1="469.84000000000003" y1="53.2" x2="460.24" y2="63.4" stroke="#8a8888" stroke-width="0.9"/>
<path d="M462.24,63.2 L462.24,57.2 Q462.24,55.4 463.84000000000003,55.4 L466.24,55.4 Q467.84000000000003,55.4 467.84000000000003,57.2 L467.84000000000003,63.2 Z" fill="none" stroke="#333" stroke-width="1.1"/>
<rect x="463.64000000000004" y="57.8" width="2.8" height="4.2" fill="#333"/>
<line x1="464.24" y1="55.2" x2="466.84000000000003" y2="52.8" stroke="#333" stroke-width="1.1"/>
<rect x="474.56" y="51.0" width="13.8" height="14.5" fill="#f6f41e"/>
<rect x="487.46" y="51.0" width="0.9" height="14.5" fill="#c2c030"/>
<rect x="474.56" y="64.6" width="13.8" height="0.9" fill="#c2c030"/>
<path d="M478.76,63.2 L478.76,57.2 Q478.76,55.4 480.36,55.4 L482.76,55.4 Q484.36,55.4 484.36,57.2 L484.36,63.2 Z" fill="none" stroke="#3a3a10" stroke-width="1.1"/>
<rect x="480.16" y="57.8" width="2.8" height="4.2" fill="#3a3a10"/>
<line x1="480.76" y1="55.2" x2="483.36" y2="52.8" stroke="#3a3a10" stroke-width="1.1"/>
<rect x="491.08000000000004" y="51.0" width="13.800000000000011" height="14.5" fill="#f0eeee"/>
<rect x="491.08000000000004" y="51.0" width="13.800000000000011" height="1.2" fill="#fdfdfd"/>
<rect x="491.08000000000004" y="51.0" width="1.2" height="14.5" fill="#fdfdfd"/>
<rect x="491.08000000000004" y="64.3" width="13.800000000000011" height="1.2" fill="#9a9898"/>
<rect x="503.68000000000006" y="51.0" width="1.2" height="14.5" fill="#9a9898"/>
<line x1="493.28000000000003" y1="53.2" x2="502.88000000000005" y2="63.4" stroke="#8a8888" stroke-width="0.9"/>
<line x1="502.88000000000005" y1="53.2" x2="493.28000000000003" y2="63.4" stroke="#8a8888" stroke-width="0.9"/>
<path d="M495.28000000000003,63.2 L495.28000000000003,57.2 Q495.28000000000003,55.4 496.88000000000005,55.4 L499.28000000000003,55.4 Q500.88000000000005,55.4 500.88000000000005,57.2 L500.88000000000005,63.2 Z" fill="none" stroke="#333" stroke-width="1.1"/>
<rect x="496.68000000000006" y="57.8" width="2.8" height="4.2" fill="#333"/>
<line x1="497.28000000000003" y1="55.2" x2="499.88000000000005" y2="52.8" stroke="#333" stroke-width="1.1"/>
<rect x="507.6" y="51.0" width="13.8" height="14.5" fill="#f6f41e"/>
<rect x="520.5" y="51.0" width="0.9" height="14.5" fill="#c2c030"/>
<rect x="507.6" y="64.6" width="13.8" height="0.9" fill="#c2c030"/>
<path d="M511.8,63.2 L511.8,57.2 Q511.8,55.4 513.4,55.4 L515.8000000000001,55.4 Q517.4,55.4 517.4,57.2 L517.4,63.2 Z" fill="none" stroke="#3a3a10" stroke-width="1.1"/>
<rect x="513.2" y="57.8" width="2.8" height="4.2" fill="#3a3a10"/>
<line x1="513.8000000000001" y1="55.2" x2="516.4" y2="52.8" stroke="#3a3a10" stroke-width="1.1"/>
<rect x="524.12" y="51.0" width="13.799999999999955" height="14.5" fill="#f0eeee"/>
<rect x="524.12" y="51.0" width="13.799999999999955" height="1.2" fill="#fdfdfd"/>
<rect x="524.12" y="51.0" width="1.2" height="14.5" fill="#fdfdfd"/>
<rect x="524.12" y="64.3" width="13.799999999999955" height="1.2" fill="#9a9898"/>
<rect x="536.7199999999999" y="51.0" width="1.2" height="14.5" fill="#9a9898"/>
<line x1="526.32" y1="53.2" x2="535.92" y2="63.4" stroke="#8a8888" stroke-width="0.9"/>
<line x1="535.92" y1="53.2" x2="526.32" y2="63.4" stroke="#8a8888" stroke-width="0.9"/>
<path d="M528.32,63.2 L528.32,57.2 Q528.32,55.4 529.92,55.4 L532.32,55.4 Q533.92,55.4 533.92,57.2 L533.92,63.2 Z" fill="none" stroke="#333" stroke-width="1.1"/>
<rect x="529.72" y="57.8" width="2.8" height="4.2" fill="#333"/>
<line x1="530.32" y1="55.2" x2="532.92" y2="52.8" stroke="#333" stroke-width="1.1"/>
<rect x="540.64" y="51.0" width="13.8" height="14.5" fill="#f6f41e"/>
<rect x="553.54" y="51.0" width="0.9" height="14.5" fill="#c2c030"/>
<rect x="540.64" y="64.6" width="13.8" height="0.9" fill="#c2c030"/>
<path d="M544.84,63.2 L544.84,57.2 Q544.84,55.4 546.4399999999999,55.4 L548.84,55.4 Q550.4399999999999,55.4 550.4399999999999,57.2 L550.4399999999999,63.2 Z" fill="none" stroke="#3a3a10" stroke-width="1.1"/>
<rect x="546.24" y="57.8" width="2.8" height="4.2" fill="#3a3a10"/>
<line x1="546.84" y1="55.2" x2="549.4399999999999" y2="52.8" stroke="#3a3a10" stroke-width="1.1"/>
<rect x="557.1600000000001" y="51.0" width="13.799999999999955" height="14.5" fill="#f0eeee"/>
<rect x="557.1600000000001" y="51.0" width="13.799999999999955" height="1.2" fill="#fdfdfd"/>
<rect x="557.1600000000001" y="51.0" width="1.2" height="14.5" fill="#fdfdfd"/>
<rect x="557.1600000000001" y="64.3" width="13.799999999999955" height="1.2" fill="#9a9898"/>
<rect x="569.76" y="51.0" width="1.2" height="14.5" fill="#9a9898"/>
<line x1="559.3600000000001" y1="53.2" x2="568.96" y2="63.4" stroke="#8a8888" stroke-width="0.9"/>
<line x1="568.96" y1="53.2" x2="559.3600000000001" y2="63.4" stroke="#8a8888" stroke-width="0.9"/>
<path d="M561.3600000000001,63.2 L561.3600000000001,57.2 Q561.3600000000001,55.4 562.96,55.4 L565.3600000000001,55.4 Q566.96,55.4 566.96,57.2 L566.96,63.2 Z" fill="none" stroke="#333" stroke-width="1.1"/>
<rect x="562.7600000000001" y="57.8" width="2.8" height="4.2" fill="#333"/>
<line x1="563.3600000000001" y1="55.2" x2="565.96" y2="52.8" stroke="#333" stroke-width="1.1"/>
<rect x="573.6800000000001" y="51.0" width="13.8" height="14.5" fill="#f6f41e"/>
<rect x="586.58" y="51.0" width="0.9" height="14.5" fill="#c2c030"/>
<rect x="573.6800000000001" y="64.6" width="13.8" height="0.9" fill="#c2c030"/>
<path d="M577.8800000000001,63.2 L577.8800000000001,57.2 Q577.8800000000001,55.4 579.48,55.4 L581.8800000000001,55.4 Q583.48,55.4 583.48,57.2 L583.48,63.2 Z" fill="none" stroke="#3a3a10" stroke-width="1.1"/>
<rect x="579.2800000000001" y="57.8" width="2.8" height="4.2" fill="#3a3a10"/>
<line x1="579.8800000000001" y1="55.2" x2="582.48" y2="52.8" stroke="#3a3a10" stroke-width="1.1"/>
<rect x="590.2" y="51.0" width="13.799999999999955" height="14.5" fill="#f0eeee"/>
<rect x="590.2" y="51.0" width="13.799999999999955" height="1.2" fill="#fdfdfd"/>
<rect x="590.2" y="51.0" width="1.2" height="14.5" fill="#fdfdfd"/>
<rect x="590.2" y="64.3" width="13.799999999999955" height="1.2" fill="#9a9898"/>
<rect x="602.8" y="51.0" width="1.2" height="14.5" fill="#9a9898"/>
<line x1="592.4000000000001" y1="53.2" x2="602.0" y2="63.4" stroke="#8a8888" stroke-width="0.9"/>
<line x1="602.0" y1="53.2" x2="592.4000000000001" y2="63.4" stroke="#8a8888" stroke-width="0.9"/>
<path d="M594.4000000000001,63.2 L594.4000000000001,57.2 Q594.4000000000001,55.4 596.0,55.4 L598.4000000000001,55.4 Q600.0,55.4 600.0,57.2 L600.0,63.2 Z" fill="none" stroke="#333" stroke-width="1.1"/>
<rect x="595.8000000000001" y="57.8" width="2.8" height="4.2" fill="#333"/>
<line x1="596.4000000000001" y1="55.2" x2="599.0" y2="52.8" stroke="#333" stroke-width="1.1"/>
<rect x="606.72" y="51.0" width="13.8" height="14.5" fill="#f6f41e"/>
<rect x="619.62" y="51.0" width="0.9" height="14.5" fill="#c2c030"/>
<rect x="606.72" y="64.6" width="13.8" height="0.9" fill="#c2c030"/>
<path d="M610.9200000000001,63.2 L610.9200000000001,57.2 Q610.9200000000001,55.4 612.52,55.4 L614.9200000000001,55.4 Q616.52,55.4 616.52,57.2 L616.52,63.2 Z" fill="none" stroke="#3a3a10" stroke-width="1.1"/>
<rect x="612.32" y="57.8" width="2.8" height="4.2" fill="#3a3a10"/>
<line x1="612.9200000000001" y1="55.2" x2="615.52" y2="52.8" stroke="#3a3a10" stroke-width="1.1"/>
<rect x="623.24" y="51.0" width="13.799999999999955" height="14.5" fill="#f0eeee"/>
<rect x="623.24" y="51.0" width="13.799999999999955" height="1.2" fill="#fdfdfd"/>
<rect x="623.24" y="51.0" width="1.2" height="14.5" fill="#fdfdfd"/>
<rect x="623.24" y="64.3" width="13.799999999999955" height="1.2" fill="#9a9898"/>
<rect x="635.8399999999999" y="51.0" width="1.2" height="14.5" fill="#9a9898"/>
<line x1="625.44" y1="53.2" x2="635.04" y2="63.4" stroke="#8a8888" stroke-width="0.9"/>
<line x1="635.04" y1="53.2" x2="625.44" y2="63.4" stroke="#8a8888" stroke-width="0.9"/>
<path d="M627.44,63.2 L627.44,57.2 Q627.44,55.4 629.04,55.4 L631.44,55.4 Q633.04,55.4 633.04,57.2 L633.04,63.2 Z" fill="none" stroke="#333" stroke-width="1.1"/>
<rect x="628.84" y="57.8" width="2.8" height="4.2" fill="#333"/>
<line x1="629.44" y1="55.2" x2="632.04" y2="52.8" stroke="#333" stroke-width="1.1"/>
<rect x="639.76" y="51.0" width="13.799999999999955" height="14.5" fill="#e6e4e4"/>
<rect x="639.76" y="51.0" width="13.799999999999955" height="1.2" fill="#fdfdfd"/>
<rect x="639.76" y="51.0" width="1.2" height="14.5" fill="#fdfdfd"/>
<rect x="639.76" y="64.3" width="13.799999999999955" height="1.2" fill="#9a9898"/>
<rect x="652.3599999999999" y="51.0" width="1.2" height="14.5" fill="#9a9898"/>
<rect x="642.76" y="54.0" width="8" height="8" fill="#dcdada"/>
<rect x="656.28" y="51.0" width="13.799999999999955" height="14.5" fill="#e6e4e4"/>
<rect x="656.28" y="51.0" width="13.799999999999955" height="1.2" fill="#fdfdfd"/>
<rect x="656.28" y="51.0" width="1.2" height="14.5" fill="#fdfdfd"/>
<rect x="656.28" y="64.3" width="13.799999999999955" height="1.2" fill="#9a9898"/>
<rect x="668.8799999999999" y="51.0" width="1.2" height="14.5" fill="#9a9898"/>
<rect x="659.28" y="53.3" width="2" height="1.6" fill="#333"/>
<rect x="662.28" y="53.3" width="2" height="1.6" fill="#333"/>
<rect x="665.28" y="53.3" width="2" height="1.6" fill="#333"/>
<path d="M659.78,55.5 L660.78,60.0 Q663.28,64.0 665.78,60.0 L666.78,55.5" fill="none" stroke="#444" stroke-width="1.2"/>
<rect x="672.8" y="51.0" width="13.799999999999955" height="14.5" fill="#e6e4e4"/>
<rect x="672.8" y="51.0" width="13.799999999999955" height="1.2" fill="#fdfdfd"/>
<rect x="672.8" y="51.0" width="1.2" height="14.5" fill="#fdfdfd"/>
<rect x="672.8" y="64.3" width="13.799999999999955" height="1.2" fill="#9a9898"/>
<rect x="685.3999999999999" y="51.0" width="1.2" height="14.5" fill="#9a9898"/>
<path d="M677.1999999999999,58.5 L677.1999999999999,56.0 A2.5,2.5 0 0 1 682.1999999999999,56.0 L682.1999999999999,58.5" fill="none" stroke="#111" stroke-width="1.6"/>
<rect x="675.8" y="58.2" width="7.8" height="5.6" rx="1.8" fill="#111"/>
<rect x="679.1999999999999" y="59.8" width="1.1" height="2.2" fill="#ddd"/>
<rect x="689.3199999999999" y="51.0" width="13.799999999999955" height="14.5" fill="#e6e4e4"/>
<rect x="689.3199999999999" y="51.0" width="13.799999999999955" height="1.2" fill="#fdfdfd"/>
<rect x="689.3199999999999" y="51.0" width="1.2" height="14.5" fill="#fdfdfd"/>
<rect x="689.3199999999999" y="64.3" width="13.799999999999955" height="1.2" fill="#9a9898"/>
<rect x="701.9199999999998" y="51.0" width="1.2" height="14.5" fill="#9a9898"/>
<path d="M693.7199999999999,56.6 L693.7199999999999,56.0 A2.5,2.5 0 0 1 698.7199999999999,56.0 L698.7199999999999,58.5" fill="none" stroke="#111" stroke-width="1.6"/>
<rect x="692.3199999999999" y="58.2" width="7.8" height="5.6" rx="1.8" fill="#111"/>
<rect x="695.7199999999999" y="59.8" width="1.1" height="2.2" fill="#ddd"/>
<rect x="705.8399999999999" y="51.0" width="14.200000000000045" height="14.5" fill="#e6e4e4"/>
<rect x="705.8399999999999" y="51.0" width="14.200000000000045" height="1.2" fill="#fdfdfd"/>
<rect x="705.8399999999999" y="51.0" width="1.2" height="14.5" fill="#fdfdfd"/>
<rect x="705.8399999999999" y="64.3" width="14.200000000000045" height="1.2" fill="#9a9898"/>
<rect x="718.8399999999999" y="51.0" width="1.2" height="14.5" fill="#9a9898"/>
<rect x="708.3399999999999" y="54.2" width="9" height="1.3" fill="#222"/>
<rect x="708.3399999999999" y="61.0" width="9" height="1.3" fill="#222"/>
<rect x="709.8399999999999" y="56.2" width="6" height="4.2" fill="#555"/>
<rect x="712.2399999999999" y="52.6" width="1.1" height="11.5" fill="#222"/>
<rect x="710.6399999999999" y="57.8" width="4.4" height="0.9" fill="#ddd"/>
<rect x="722.36" y="51.0" width="13.799999999999955" height="14.5" fill="#e6e4e4"/>
<rect x="722.36" y="51.0" width="13.799999999999955" height="1.2" fill="#fdfdfd"/>
<rect x="722.36" y="51.0" width="1.2" height="14.5" fill="#fdfdfd"/>
<rect x="722.36" y="64.3" width="13.799999999999955" height="1.2" fill="#9a9898"/>
<rect x="734.9599999999999" y="51.0" width="1.2" height="14.5" fill="#9a9898"/>
<rect x="725.36" y="54.0" width="8" height="8" fill="#dcdada"/>
<rect x="738.88" y="51.0" width="13.799999999999955" height="14.5" fill="#e6e4e4"/>
<rect x="738.88" y="51.0" width="13.799999999999955" height="1.2" fill="#fdfdfd"/>
<rect x="738.88" y="51.0" width="1.2" height="14.5" fill="#fdfdfd"/>
<rect x="738.88" y="64.3" width="13.799999999999955" height="1.2" fill="#9a9898"/>
<rect x="751.4799999999999" y="51.0" width="1.2" height="14.5" fill="#9a9898"/>
<path d="M742.48,59.0 A3.8,3.8 0 1 1 746.48,61.8" fill="none" stroke="#c4c2c2" stroke-width="1.2"/>
<rect x="755.4" y="51.0" width="14.200000000000045" height="14.5" fill="#e6e4e4"/>
<rect x="755.4" y="51.0" width="14.200000000000045" height="1.2" fill="#fdfdfd"/>
<rect x="755.4" y="51.0" width="1.2" height="14.5" fill="#fdfdfd"/>
<rect x="755.4" y="64.3" width="14.200000000000045" height="1.2" fill="#9a9898"/>
<rect x="768.4" y="51.0" width="1.2" height="14.5" fill="#9a9898"/>
<path d="M758.6,53.5 L758.6,63.2 L767.1999999999999,63.2 Z" fill="none" stroke="#222" stroke-width="1.4"/>
<rect x="771.9200000000001" y="51.0" width="14.2" height="14.6" fill="#9aa0f2"/>
<rect x="771.9200000000001" y="51.0" width="14.2" height="0.9" fill="#c6c9f6"/>
<rect x="785.22" y="51.0" width="0.9" height="14.6" fill="#7a80c8"/>
<rect x="771.9200000000001" y="64.7" width="14.2" height="0.9" fill="#7a80c8"/>
<line x1="774.72" y1="53.8" x2="783.32" y2="62.8" stroke="#c4c6ea" stroke-width="1.1"/>
<line x1="783.32" y1="53.8" x2="774.72" y2="62.8" stroke="#c4c6ea" stroke-width="1.1"/>
<rect x="805.8" y="51.0" width="14.2" height="14.6" fill="#9aa0f2"/>
<rect x="805.8" y="51.0" width="14.2" height="0.9" fill="#c6c9f6"/>
<rect x="819.0999999999999" y="51.0" width="0.9" height="14.6" fill="#7a80c8"/>
<rect x="805.8" y="64.7" width="14.2" height="0.9" fill="#7a80c8"/>
<polyline points="808.5999999999999,58.8 811.5999999999999,62.0 817.5999999999999,54.4" fill="none" stroke="#c4c6ea" stroke-width="1.4"/>
<rect x="260.2" y="67.8" width="14.0" height="14.400000000000006" fill="#e6e4e4"/>
<rect x="260.2" y="67.8" width="14.0" height="1.2" fill="#fdfdfd"/>
<rect x="260.2" y="67.8" width="1.2" height="14.400000000000006" fill="#fdfdfd"/>
<rect x="260.2" y="81.0" width="14.0" height="1.2" fill="#9a9898"/>
<rect x="273.0" y="67.8" width="1.2" height="14.400000000000006" fill="#9a9898"/>
<path d="M263,70.5 L268,72 L268,80 L263,78.5 Z" fill="#e8e8e8" stroke="#444" stroke-width="0.9"/>
<polygon points="267.5,73 272.2,75.5 267.5,78" fill="#111"/>
<rect x="268.5" y="74.8" width="2" height="1.4" fill="#111"/>
<rect x="258.8" y="83.9" width="297.2" height="14.1" fill="#c4c2c2"/>
<rect x="258.8" y="83.9" width="297.2" height="0.9" fill="#aeacac"/>
<rect x="556" y="83.9" width="0.8" height="14.1" fill="#f0f0f0"/>
<rect x="258.8" y="114.9" width="563.4" height="1.0" fill="#f2f0f0"/>
<rect x="258.8" y="116.4" width="6.7" height="366.0" fill="#c6c4c4"/>
<rect x="258.8" y="116.4" width="1.0" height="366.0" fill="#dcdada"/>
<rect x="265.4" y="482.4" width="557" height="5.9" fill="#c6c4c4"/>
<rect x="265.4" y="116.4" width="557" height="366.0" fill="#000000"/>
<rect x="258.9" y="308.6" width="5.8" height="2.5" fill="#f4f4f4"/>
<polygon points="259.5,122.5 262,117.5 264.5,122.5" fill="#f6f6f6"/>
<rect x="259" y="123" width="6" height="0.8" fill="#eee"/>
<polygon points="259.5,475.5 262,480.5 264.5,475.5" fill="#eee"/>
<polygon points="272,482.8 267,485.3 272,487.8" fill="#eee"/>
<polygon points="815,482.8 820,485.3 815,487.8" fill="#eee"/>
<rect x="258.8" y="488.3" width="563.4" height="15" fill="#e6e4e4"/>
<rect x="713" y="490" width="108.3" height="11.7" fill="#ffffff"/>
<rect x="713" y="490" width="108.3" height="0.8" fill="#b0aeae"/>
<rect x="713" y="490" width="0.8" height="11.7" fill="#b0aeae"/>
<rect x="258.8" y="503.2" width="563.4" height="1" fill="#b4b2b2"/>
<rect x="258.8" y="504.2" width="563.4" height="10.7" fill="#ffffff"/>
<defs><clipPath id="cv"><rect x="265.4" y="116.4" width="557" height="366.0"/></clipPath></defs>
<g clip-path="url(#cv)">
<polygon points="410.6,115 468.6,115 425.1,142.6" fill="#16981a"/>
<line x1="342.2" y1="116" x2="265" y2="147.7" stroke="#22d022" stroke-width="2.4"/>
<line x1="264.8" y1="122.7" x2="408.6" y2="482.4" stroke="#dca4ac" stroke-width="1.6"/>
<line x1="265.4" y1="277" x2="344.6" y2="482.4" stroke="#1a9ae0" stroke-width="2.2"/>
<polyline points="532.6,322.7 550.4,367.2 436.7,413.3 465.2,482.6" fill="none" stroke="#1a9ae0" stroke-width="2.2"/>
<polyline points="575.8,322.7 602.4,387.1 361,482.8" fill="none" stroke="#1a9ae0" stroke-width="2.2"/>
<line x1="265.4" y1="426" x2="287" y2="482.4" stroke="#7a9a7a" stroke-width="1.3"/>
<polygon points="557.8,259.4 482.5,304.7 550,427 624.8,378.6" fill="none" stroke="#1f5c1f" stroke-width="1.2"/>
<line x1="564.3" y1="361.5" x2="624.8" y2="379" stroke="#1f5c1f" stroke-width="1.3"/>
<polygon points="549.5,424.6 624.7,380.1 645.8,418.8 570.7,463.7" fill="#139913"/>
<line x1="510.9" y1="299.6" x2="577.3" y2="299.6" stroke="#1a7cc6" stroke-width="1.2"/>
<line x1="511.2" y1="299.6" x2="511.2" y2="322.7" stroke="#1a7cc6" stroke-width="1.1"/>
<rect x="506.7" y="306" width="9" height="8.6" fill="#000" stroke="#1a7cc6" stroke-width="1.0"/>
<line x1="509.2" y1="313" x2="513.2" y2="308" stroke="#1a7cc6" stroke-width="0.9"/>
<line x1="532.6" y1="299.6" x2="532.6" y2="322.7" stroke="#1a7cc6" stroke-width="1.1"/>
<rect x="527.6" y="302.5" width="10" height="13.5" fill="#000" stroke="#1a7cc6" stroke-width="1.0"/>
<line x1="530.6" y1="313" x2="535.1" y2="305" stroke="#1a7cc6" stroke-width="0.9"/>
<line x1="554.5" y1="299.6" x2="554.5" y2="322.7" stroke="#1a7cc6" stroke-width="1.1"/>
<rect x="550.0" y="306" width="9" height="8.6" fill="#000" stroke="#1a7cc6" stroke-width="1.0"/>
<line x1="552.5" y1="313" x2="556.5" y2="308" stroke="#1a7cc6" stroke-width="0.9"/>
<line x1="576.1" y1="299.6" x2="576.1" y2="322.7" stroke="#1a7cc6" stroke-width="1.1"/>
<rect x="571.1" y="302.5" width="10" height="13.5" fill="#000" stroke="#1a7cc6" stroke-width="1.0"/>
<line x1="574.1" y1="313" x2="578.6" y2="305" stroke="#1a7cc6" stroke-width="0.9"/>
<text x="511.2" y="295.5" font-size="6.1" fill="#f0f0f0" font-family="Liberation Mono" textLength="5" lengthAdjust="spacingAndGlyphs" text-anchor="middle" font-weight="bold">S1</text>
<text x="532.6" y="295.5" font-size="6.1" fill="#f0f0f0" font-family="Liberation Mono" textLength="5" lengthAdjust="spacingAndGlyphs" text-anchor="middle" font-weight="bold">S2</text>
<text x="554.5" y="295.5" font-size="6.1" fill="#f0f0f0" font-family="Liberation Mono" textLength="5" lengthAdjust="spacingAndGlyphs" text-anchor="middle" font-weight="bold">S3</text>
<text x="576.1" y="295.5" font-size="6.1" fill="#f0f0f0" font-family="Liberation Mono" textLength="5" lengthAdjust="spacingAndGlyphs" text-anchor="middle" font-weight="bold">S4</text>
<text x="717" y="308" font-family="Liberation Serif" font-size="65" fill="none" stroke="#a8a8a8" stroke-width="1" transform="translate(717 0) scale(0.75 1) translate(-717 0)" letter-spacing="-4">BC23</text>
</g>
<line x1="241" y1="136.3" x2="497" y2="227.6" stroke="#ffffff" stroke-width="4.1" stroke-linecap="round"/>
<polygon points="506.2,230.9 498.2,222.9 494.8,232.6" fill="#ffffff" stroke="#ffffff" stroke-width="1.2" stroke-linejoin="round"/>
</svg></body></html>
